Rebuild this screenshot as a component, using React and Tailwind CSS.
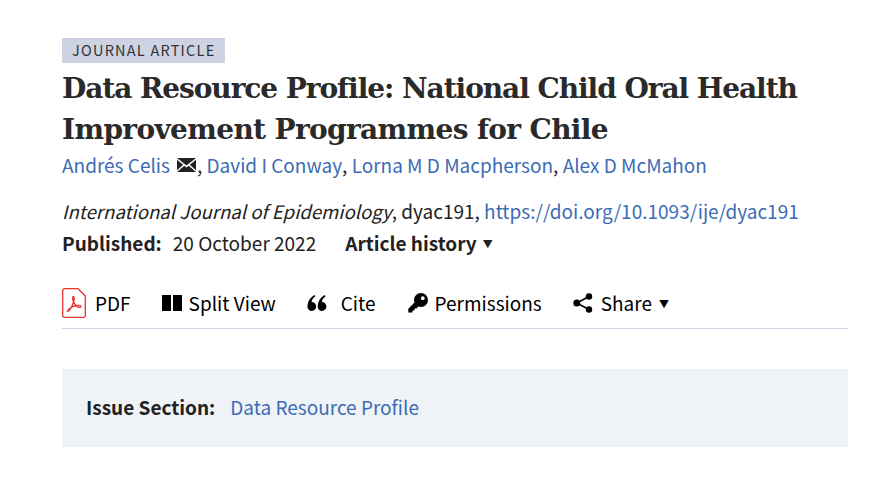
import React from "react";

const sans = { fontFamily: '"Noto Sans CJK SC", "Noto Sans", sans-serif' };

function Pdf() {
  return (
    <svg width="24" height="30" viewBox="0 0 24 30" fill="none" className="shrink-0">
      <path d="M2.5 0.7H16L23.3 8V27.5a1.8 1.8 0 0 1-1.8 1.8H2.5A1.8 1.8 0 0 1 .7 27.5V2.5A1.8 1.8 0 0 1 2.5.7Z" stroke="#e8332e" strokeWidth="1.3" />
      <path d="M5.5 23.5C8 22.5 10.5 18 12 12.5c.4-2 .2-4-.6-4-.9 0-1 2.200-.4 4 1 3 3 5.500 4.500 6.500 1.500.8 3.500.5 3.500-.4 0-1-2-1.300-4-1.100-3 .3-6 1.500-8 3.500-1.200 1.200-1.800 2.500-1.500 2.500Z" stroke="#e8332e" strokeWidth="1.300" strokeLinejoin="round" />
    </svg>
  );
}

function Split() {
  return (
    <svg width="20" height="16" viewBox="0 0 20 16" className="shrink-0">
      <rect x="0" y="0" width="9" height="16" fill="#000" />
      <rect x="11" y="0" width="9" height="16" fill="#000" />
    </svg>
  );
}

function Quote() {
  return (
    <svg width="20" height="16" viewBox="0 0 20 16" className="shrink-0">
      <path d="M4.800 16a4.300 4.300 0 0 1-4.300-4.500C.5 7 3 2.500 7.500 0l.8 1.200C6 3 4.800 5 4.600 7a4.500 4.500 0 0 1 .2 9Z" fill="#000" />
      <path d="M15 16a4.300 4.300 0 0 1-4.300-4.500c0-4.500 2.500-9 7-11.500l.8 1.200C16.200 3 15 5 14.800 7a4.500 4.500 0 0 1 .2 9Z" fill="#000" />
    </svg>
  );
}

function KeyIcon() {
  return (
    <svg width="20" height="20" viewBox="0 0 20 20" className="shrink-0">
      <path d="M13 0a7 7 0 0 1 0 14c-.9 0-1.700-.2-2.500-.5L8.500 15.500H6.500V17.500H4.500V19.500H.3V15.800L6.500 9.500A7 7 0 0 1 13 0Zm1.800 3.300a1.900 1.900 0 1 0 0 3.800 1.900 1.900 0 0 0 0-3.800Z" fill="#000" fillRule="evenodd" />
    </svg>
  );
}

function ShareIcon() {
  return (
    <svg width="20" height="20" viewBox="0 0 20 20" className="shrink-0">
      <circle cx="3.800" cy="10" r="3.500" fill="#000" />
      <circle cx="16" cy="3.500" r="3.200" fill="#000" />
      <circle cx="16" cy="16.500" r="3.200" fill="#000" />
      <path d="M3.800 10 16 3.500M3.800 10 16 16.500" stroke="#000" strokeWidth="1.600" />
    </svg>
  );
}

function Mail() {
  return (
    <svg width="19" height="14" viewBox="0 0 19 14" className="shrink-0">
      <path d="M0 0H19L9.500 7.500Z" fill="#222" />
      <path d="M0 1.800V12.200L6.200 6.700ZM19 1.800V12.200L12.800 6.700Z" fill="#222" />
      <path d="M0 14 7.300 7.700 9.500 9.400 11.700 7.700 19 14Z" fill="#222" />
    </svg>
  );
}

const Link = ({ children }) => <a className="text-[#3c6cb4]">{children}</a>;

export default function App() {
  return (
    <div className="min-h-[486px] bg-white pl-[62px] pr-[39px] pt-[38px] text-[#222]" style={sans}>
      <div className="flex">
        <span className="flex h-[25px] items-center bg-[#cdd3e2] px-[10px] pb-[2px] text-[14.5px] tracking-[1.23px] text-[#333]">JOURNAL ARTICLE</span>
      </div>
      <h1
        className="mt-[5px] text-[28px] font-bold leading-[41px] text-[#2a2a2a]"
        style={{ fontFamily: '"DejaVu Serif", serif' }}
      >
        <span className="block whitespace-nowrap tracking-[-1.05px]">Data Resource Profile: National Child Oral Health</span>
        <span className="block whitespace-nowrap tracking-[-0.65px]">Improvement Programmes for Chile</span>
      </h1>
      <div className="mt-[2px] flex h-[26px] items-center text-[19px] text-[#3c6cb4]">
        <Link>Andrés Celis</Link>
        <span className="ml-[7px] mr-px"><Mail /></span>
        <span className="text-[#222]">,&nbsp;</span>
        <Link>David I Conway</Link>
        <span className="text-[#222]">,&nbsp;</span>
        <Link>Lorna M D Macpherson</Link>
        <span className="text-[#222]">,&nbsp;</span>
        <Link>Alex D McMahon</Link>
      </div>
      <div className="mt-[20px] flex h-[26px] items-center whitespace-pre text-[19px]">
        <em className="text-[18.6px]">International Journal of Epidemiology</em>
        <span>, dyac191, </span>
        <Link>https://doi.org/10.1093/ije/dyac191</Link>
      </div>
      <div className="mt-[6px] flex h-[26px] items-center text-[19px]">
        <span className="font-bold">Published:</span>
        <span className="ml-[11px]">20 October 2022</span>
        <span className="ml-[29px] font-bold">Article history</span>
        <span className="ml-[6px] text-[10px]">▼</span>
      </div>
      <div className="mt-[32px] flex h-[41px] items-start border-b border-[#cdd3e2] text-[19px] text-black">
        <div className="flex h-[30px] items-center">
          <Pdf />
          <span className="ml-[9px]">PDF</span>
        </div>
        <div className="ml-[31px] flex h-[30px] items-center">
          <Split />
          <span className="ml-[7px]">Split View</span>
        </div>
        <div className="ml-[31px] flex h-[30px] items-center">
          <Quote />
          <span className="ml-[14px]">Cite</span>
        </div>
        <div className="ml-[32px] flex h-[30px] items-center">
          <KeyIcon />
          <span className="ml-[7px]">Permissions</span>
        </div>
        <div className="ml-[31px] flex h-[30px] items-center">
          <ShareIcon />
          <span className="ml-[8px]">Share</span>
          <span className="ml-[7px] text-[10px]">▼</span>
        </div>
      </div>
      <div className="mt-[40px] flex h-[78px] items-center bg-[#eff2f7] px-[24px] pb-[2px] text-[19px]">
        <span className="font-bold">Issue Section:</span>
        <span className="ml-[15px] text-[#3c6cb4]">Data Resource Profile</span>
      </div>
    </div>
  );
}
